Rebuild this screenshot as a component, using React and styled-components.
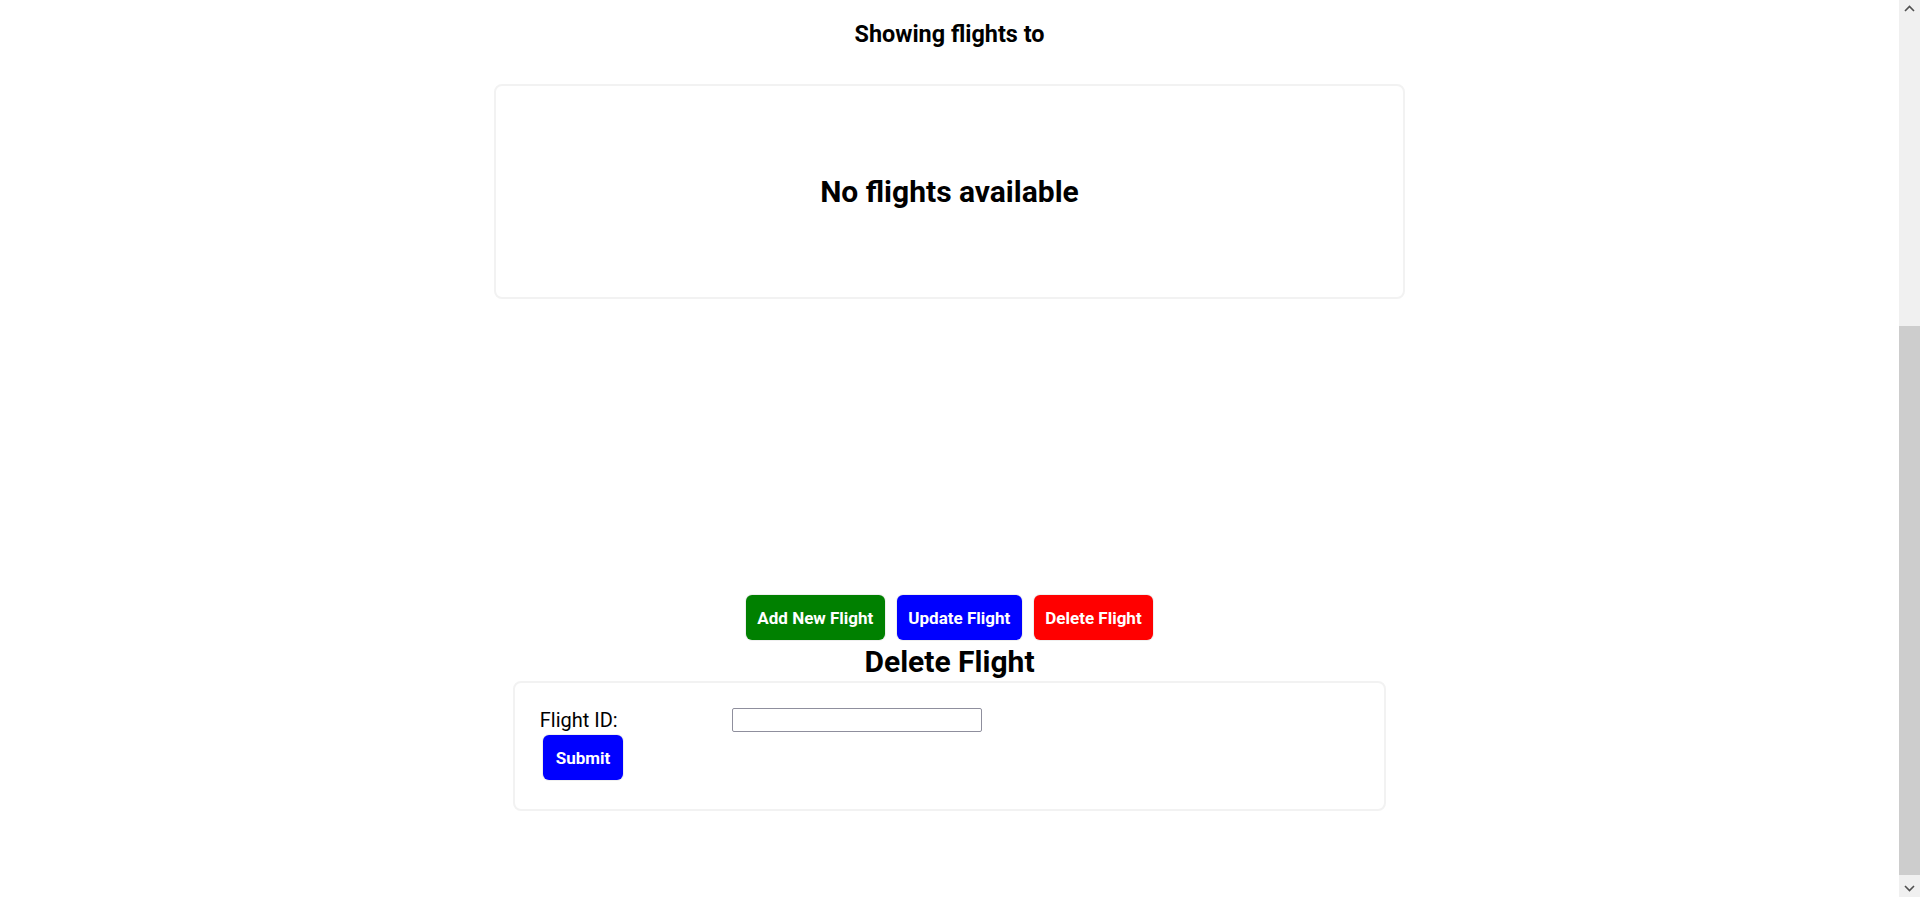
import React from 'react';
import styled, { createGlobalStyle } from 'styled-components';

const GlobalStyle = createGlobalStyle`
  html, body {
    margin: 0;
    padding: 0;
    background: #fff;
    overflow: hidden;
  }
  body {
    font-family: Roboto, "Liberation Sans", sans-serif;
    color: #000;
  }
`;

const Page = styled.main`
  margin-right: 21px;
  display: flex;
  flex-direction: column;
  align-items: center;
  min-height: 897px;
`;

const Title = styled.h3`
  margin: 20px 0 0;
  font-size: 23.4px;
  line-height: 28px;
  font-weight: 700;
`;

const Card = styled.section`
  box-sizing: border-box;
  width: ${(p) => p.$width};
  height: ${(p) => p.$height}px;
  margin-top: ${(p) => p.$top}px;
  border: 2px solid #f2f2f2;
  border-radius: 8px;
  background: #fff;
`;

const Empty = styled.div`
  height: 100%;
  display: flex;
  align-items: center;
  justify-content: center;
  font-size: 30px;
  font-weight: 700;
`;

const Actions = styled.div`
  display: flex;
  gap: 12px;
  margin-top: 296px;
`;

const Button = styled.button`
  box-sizing: border-box;
  height: 45px;
  padding: 0 11.5px;
  border: none;
  box-shadow: 0 0 0 1px #efefef;
  border-radius: 6px;
  background: ${(p) => p.$color};
  color: #fff;
  font-family: Roboto, "Liberation Sans", sans-serif;
  font-size: 17px;
  font-weight: 700;
  line-height: 20px;
  cursor: pointer;
`;

const Heading = styled.h2`
  margin: 5px 0 0;
  font-size: 30px;
  line-height: 34px;
  font-weight: 700;
`;

const Form = styled.form`
  box-sizing: border-box;
  height: 100%;
  padding: 25px 25px;
  display: flex;
  flex-direction: column;
  align-items: flex-start;
`;

const Field = styled.div`
  display: flex;
  align-items: center;
  height: 24px;
`;

const Label = styled.label`
  width: 192px;
  font-size: 20px;
  line-height: 23px;
`;

const Input = styled.input`
  box-sizing: border-box;
  width: 250px;
  height: 24px;
  margin: 0;
  border: 1px solid #8f8f9d;
  border-radius: 2px;
  padding: 2px 4px;
  font-family: Roboto, "Liberation Sans", sans-serif;
`;

const Submit = styled(Button)`
  margin: 3px 0 0 3px;
  padding: 0 13px;
`;

const ScrollTrack = styled.div`
  position: fixed;
  top: 0;
  right: 0;
  bottom: 0;
  width: 21px;
  background: #f0f0f0;
`;

const Thumb = styled.div`
  position: absolute;
  left: 0;
  right: 0;
  top: 326px;
  height: 549px;
  background: #cdcdcd;
`;

const Arrow = styled.svg`
  position: absolute;
  left: 5px;
  ${(p) => (p.$down ? 'bottom: 5px;' : 'top: 5px;')}
  width: 11px;
  height: 7px;
`;

export default function App() {
  return (
    <>
      <GlobalStyle />
      <Page>
        <Title>Showing flights to</Title>
        <Card $width="48%" $height={215} $top={36}>
          <Empty>No flights available</Empty>
        </Card>
        <Actions>
          <Button $color="#008000">Add New Flight</Button>
          <Button $color="#0000ff">Update Flight</Button>
          <Button $color="#ff0000">Delete Flight</Button>
        </Actions>
        <Heading>Delete Flight</Heading>
        <Card $width="46%" $height={130} $top={2}>
          <Form onSubmit={(e) => e.preventDefault()}>
            <Field>
              <Label htmlFor="flightId">Flight ID:</Label>
              <Input id="flightId" type="text" />
            </Field>
            <Submit type="submit" $color="#0000ff">Submit</Submit>
          </Form>
        </Card>
      </Page>
      <ScrollTrack>
        <Arrow viewBox="0 0 11 7">
          <path d="M1 6 L5.5 1.5 L10 6" fill="none" stroke="#505050" strokeWidth="1.6" />
        </Arrow>
        <Thumb />
        <Arrow $down viewBox="0 0 11 7">
          <path d="M1 1 L5.5 5.5 L10 1" fill="none" stroke="#505050" strokeWidth="1.6" />
        </Arrow>
      </ScrollTrack>
    </>
  );
}
